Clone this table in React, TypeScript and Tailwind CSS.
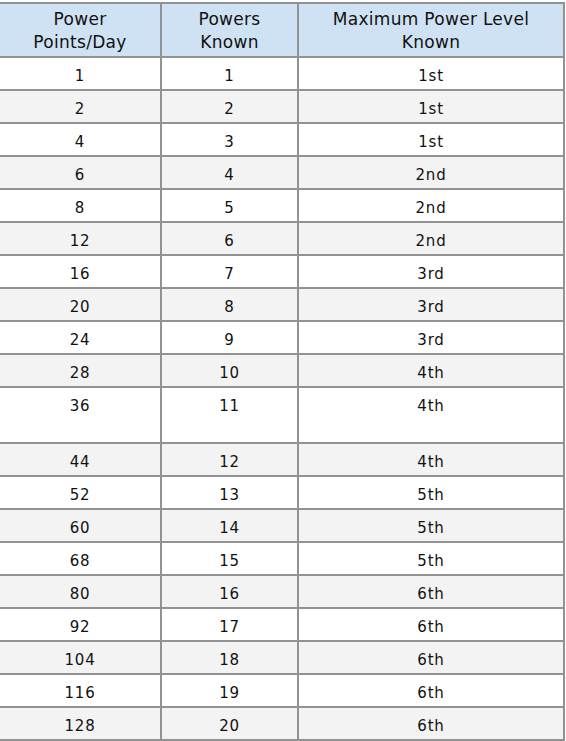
const rows: [string, string, string][] = [
  ["1", "1", "1st"],
  ["2", "2", "1st"],
  ["4", "3", "1st"],
  ["6", "4", "2nd"],
  ["8", "5", "2nd"],
  ["12", "6", "2nd"],
  ["16", "7", "3rd"],
  ["20", "8", "3rd"],
  ["24", "9", "3rd"],
  ["28", "10", "4th"],
  ["36", "11", "4th"],
  ["44", "12", "4th"],
  ["52", "13", "5th"],
  ["60", "14", "5th"],
  ["68", "15", "5th"],
  ["80", "16", "6th"],
  ["92", "17", "6th"],
  ["104", "18", "6th"],
  ["116", "19", "6th"],
  ["128", "20", "6th"],
];

export default function App() {
  return (
    <div className="w-[566px] h-[741px] overflow-hidden bg-white">
      <table
        className="mt-[2px] ml-[-2px] w-[567px] border-collapse border-2 border-[#929292] text-[#111] table-fixed"
        style={{ fontFamily: '"DejaVu Sans", "Noto Sans", sans-serif' }}
      >
        <colgroup>
          <col className="w-[162px]" />
          <col className="w-[137px]" />
          <col />
        </colgroup>
        <thead>
          <tr className="bg-[#cfe2f3]">
            {["Power Points/Day", "Powers Known", "Maximum Power Level Known"].map((h, i) => (
              <th
                key={h}
                className="border-2 border-[#929292] h-[54px] px-2 pt-[2px] align-middle text-center font-normal text-[17px] leading-[23px] tracking-[0.3px]"
              >
                {i === 0 ? (
                  <>
                    Power
                    <br />
                    Points/Day
                  </>
                ) : i === 1 ? (
                  <>
                    Powers
                    <br />
                    Known
                  </>
                ) : (
                  <>
                    Maximum Power Level
                    <br />
                    Known
                  </>
                )}
              </th>
            ))}
          </tr>
        </thead>
        <tbody>
          {rows.map((r, idx) => (
            <tr key={idx} className={idx % 2 === 1 ? "bg-[#f3f3f3]" : "bg-white"}>
              {r.map((c, j) => (
                <td
                  key={j}
                  className={`border-2 border-[#929292] text-center align-top pt-[8px] text-[15px] leading-[20px] tracking-[0.8px] ${
                    r[0] === "36" ? "h-[56px]" : "h-[33px]"
                  }`}
                >
                  {c}
                </td>
              ))}
            </tr>
          ))}
        </tbody>
      </table>
    </div>
  );
}
